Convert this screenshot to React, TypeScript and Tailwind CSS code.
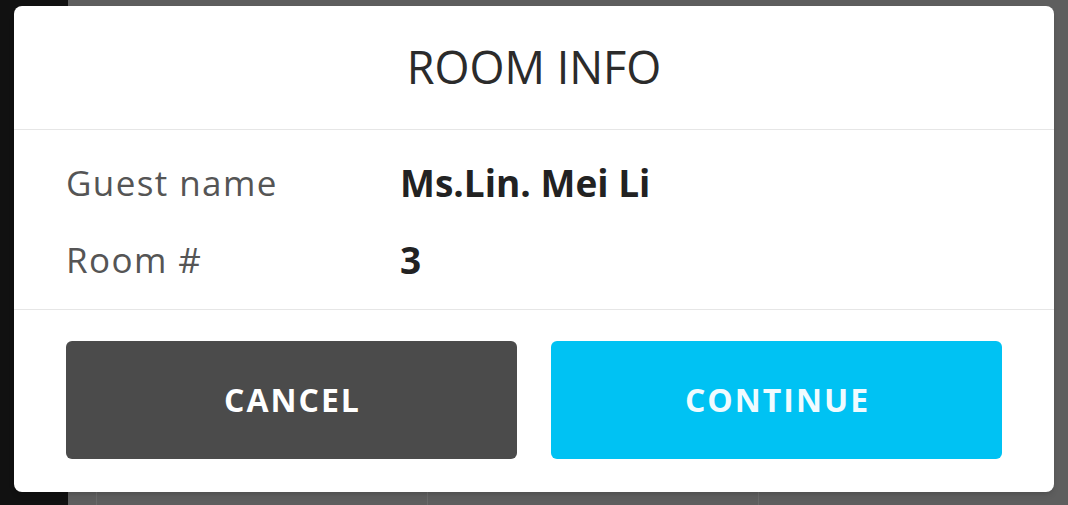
export default function App() {
  return (
    <div className="relative h-[505px] w-[1068px] overflow-hidden bg-[#5e5e5e] font-['Open_Sans',sans-serif]">
      {/* Background behind the overlay */}
      <div className="flex h-full">
        <div className="w-[68px] bg-[#111111]" />
        <div className="flex flex-1 items-end gap-[330px] pl-[28px]">
          <div className="h-[14px] w-px bg-[#6a6a6a]" />
          <div className="h-[14px] w-px bg-[#6a6a6a]" />
          <div className="h-[14px] w-px bg-[#6a6a6a]" />
        </div>
      </div>

      {/* Modal */}
      <div className="absolute left-[14px] top-[6px] flex h-[486px] w-[1040px] flex-col rounded-lg bg-white shadow-md">
        <div className="flex h-[124px] items-center justify-center border-b border-[#e6e6e6]">
          <h2 className="pb-[2px] text-[45px] leading-none text-[#2b2b2b]">ROOM INFO</h2>
        </div>

        <div className="border-b border-[#e6e6e6] px-[52px] pt-[14px] pb-[11px]">
          <div className="flex h-[77px] items-center">
            <span className="w-[334px] text-[35px] leading-none tracking-[1.4px] text-[#555555]">Guest name</span>
            <span className="text-[37px] leading-none font-bold text-[#222222]">Ms.Lin. Mei Li</span>
          </div>
          <div className="flex h-[77px] items-center">
            <span className="w-[334px] text-[35px] leading-none tracking-[1.4px] text-[#555555]">Room #</span>
            <span className="text-[37px] leading-none font-bold text-[#222222]">3</span>
          </div>
        </div>

        <div className="flex gap-[34px] px-[52px] pt-[31px]">
          <button className="flex h-[118px] flex-1 items-center justify-center rounded-md bg-[#4b4b4b] pl-[2px] text-[32px] font-bold tracking-[2px] text-white">
            CANCEL
          </button>
          <button className="flex h-[118px] flex-1 items-center justify-center rounded-md bg-[#00c2f3] pl-[2px] text-[32px] font-bold tracking-[2px] text-[#f0fbff]">
            CONTINUE
          </button>
        </div>
      </div>
    </div>
  );
}
